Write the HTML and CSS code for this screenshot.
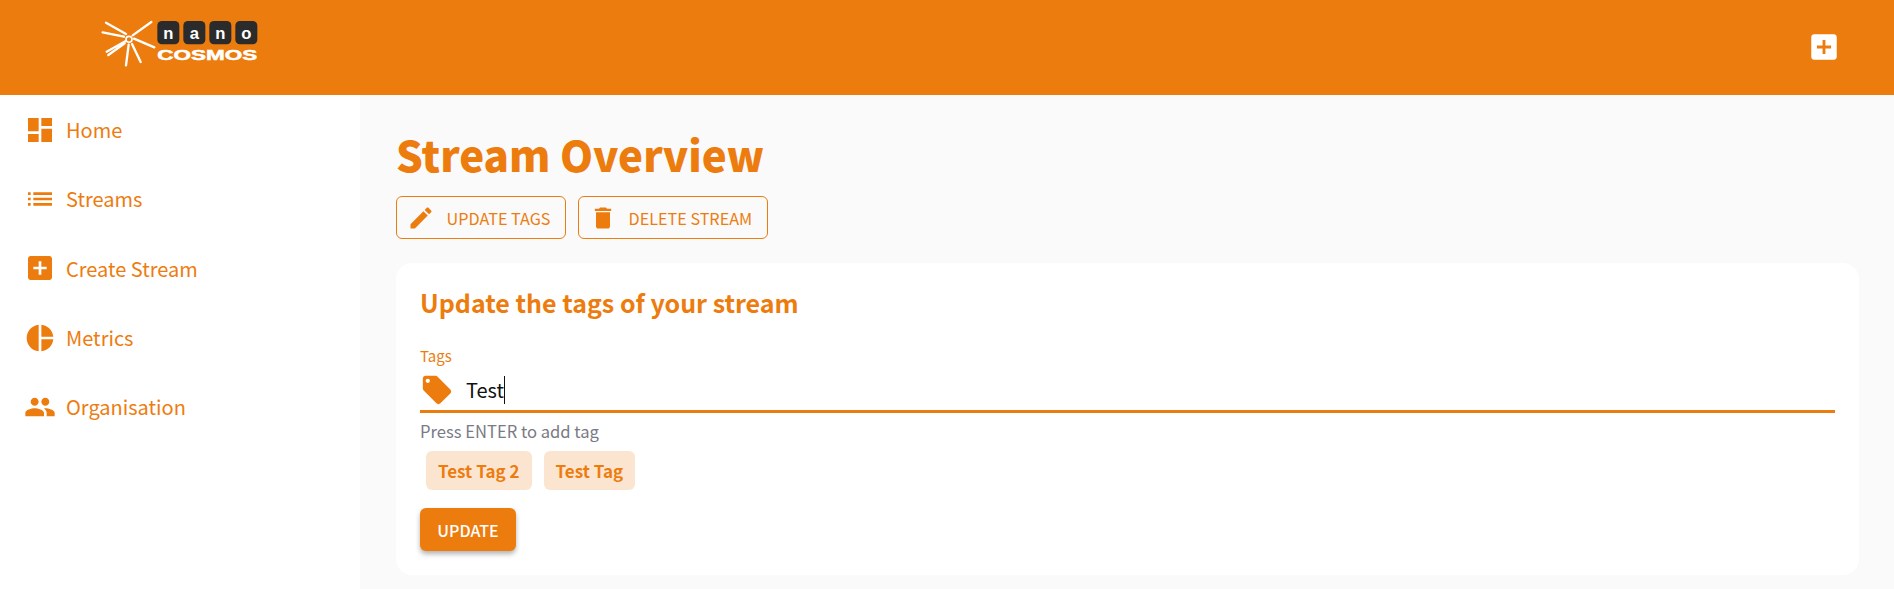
FILE: index.html
```html
<!DOCTYPE html>
<html lang="en">
<head>
<meta charset="utf-8">
<title>Stream Overview</title>
<link rel="stylesheet" href="styles.css">
</head>
<body>
<header class="topbar">
  <svg class="logo" viewBox="0 0 660 285" aria-label="nanoCOSMOS">
    <g class="rays">
      <path d="M78 68L138 102M68 97L132 110M80 155L136 124M85 165L134 130M138 196L146 134M182 186L156 132M223 142L162 116M214 66L158 106"/>
      <circle cx="147" cy="118" r="9"/>
    </g>
    <rect class="tile" x="232" y="63" width="66" height="70" rx="14"/>
    <rect class="tile" x="310" y="63" width="66" height="70" rx="14"/>
    <rect class="tile" x="388" y="63" width="66" height="70" rx="14"/>
    <rect class="tile" x="466" y="63" width="66" height="70" rx="14"/>
    <text class="logo-nano" x="265" y="116">n</text>
    <text class="logo-nano" x="343" y="116">a</text>
    <text class="logo-nano" x="421" y="116">n</text>
    <text class="logo-nano" x="499" y="116">o</text>
    <text class="logo-cosmos" x="232" y="179" textLength="300" lengthAdjust="spacingAndGlyphs">COSMOS</text>
  </svg>
  <svg class="top-add" viewBox="0 0 24 24"><path d="M19 3H5c-1.11 0-2 .9-2 2v14c0 1.1.89 2 2 2h14c1.1 0 2-.9 2-2V5c0-1.1-.9-2-2-2zm-2 10h-4v4h-2v-4H7v-2h4V7h2v4h4v2z"/></svg>
</header>
<div class="shell">
  <nav class="sidebar">
    <a class="nav-item"><svg class="nav-icon" viewBox="0 0 24 24"><path d="M3 13h8V3H3v10zm0 8h8v-6H3v6zm10 0h8V11h-8v10zm0-18v6h8V3h-8z"/></svg><span>Home</span></a>
    <a class="nav-item"><svg class="nav-icon" viewBox="0 0 24 24"><path d="M3 13h2v-2H3v2zm0 4h2v-2H3v2zm0-8h2V7H3v2zm4 4h14v-2H7v2zm0 4h14v-2H7v2zM7 7v2h14V7H7z"/></svg><span>Streams</span></a>
    <a class="nav-item"><svg class="nav-icon" viewBox="0 0 24 24"><path d="M19 3H5c-1.11 0-2 .9-2 2v14c0 1.1.89 2 2 2h14c1.1 0 2-.9 2-2V5c0-1.1-.9-2-2-2zm-2 10h-4v4h-2v-4H7v-2h4V7h2v4h4v2z"/></svg><span>Create Stream</span></a>
    <a class="nav-item"><svg class="nav-icon" viewBox="0 0 24 24"><path d="M11 2v20c-5.07-.5-9-4.79-9-10s3.93-9.5 9-10zm2.03 0v8.99H22c-.47-4.74-4.24-8.52-8.97-8.99zm0 11.01V22c4.74-.47 8.5-4.25 8.97-8.99h-8.97z"/></svg><span>Metrics</span></a>
    <a class="nav-item"><svg class="nav-icon" viewBox="0 0 24 24"><path d="M16 11c1.66 0 2.99-1.34 2.99-3S17.66 5 16 5c-1.66 0-3 1.34-3 3s1.34 3 3 3zm-8 0c1.66 0 2.99-1.34 2.99-3S9.66 5 8 5C6.34 5 5 6.34 5 8s1.34 3 3 3zm0 2c-2.33 0-7 1.17-7 3.5V19h14v-2.5c0-2.33-4.67-3.5-7-3.5zm8 0c-.29 0-.62.02-.97.05 1.16.84 1.97 1.97 1.97 3.45V19h6v-2.5c0-2.33-4.67-3.5-7-3.5z"/></svg><span>Organisation</span></a>
  </nav>
  <main class="content">
    <h1 class="page-title">Stream Overview</h1>
    <div class="actions">
      <button class="outline-btn"><svg class="btn-icon" viewBox="0 0 24 24"><path d="M3 17.25V21h3.75L17.81 9.94l-3.75-3.75L3 17.25zM20.71 7.04c.39-.39.39-1.02 0-1.41l-2.34-2.34c-.39-.39-1.02-.39-1.41 0l-1.83 1.83 3.75 3.75 1.83-1.83z"/></svg>UPDATE TAGS</button>
      <button class="outline-btn"><svg class="btn-icon" viewBox="0 0 24 24"><path d="M6 19c0 1.1.9 2 2 2h8c1.1 0 2-.9 2-2V7H6v12zM19 4h-3.5l-1-1h-5l-1 1H5v2h14V4z"/></svg>DELETE STREAM</button>
    </div>
    <section class="card">
      <h2 class="card-title">Update the tags of your stream</h2>
      <div class="field-label">Tags</div>
      <div class="field">
        <svg class="field-icon" viewBox="0 0 24 24"><path d="M21.41 11.58l-9-9C12.05 2.22 11.55 2 11 2H4c-1.1 0-2 .9-2 2v7c0 .55.22 1.05.59 1.42l9 9c.36.36.86.58 1.41.58.55 0 1.05-.22 1.41-.59l7-7c.37-.36.59-.86.59-1.41 0-.55-.23-1.06-.59-1.42zM5.5 7C4.67 7 4 6.33 4 5.5S4.67 4 5.5 4 7 4.67 7 5.5 6.33 7 5.5 7z"/></svg>
        <span class="field-value">Test</span><span class="caret"></span>
      </div>
      <div class="helper">Press ENTER to add tag</div>
      <div class="chips">
        <span class="chip">Test Tag 2</span>
        <span class="chip">Test Tag</span>
      </div>
      <button class="primary-btn">UPDATE</button>
    </section>
  </main>
</div>
</body>
</html>
```
FILE: styles.css
```css
* { box-sizing: border-box; }
html, body { margin: 0; height: 100%; overflow: hidden; }
body {
  font-family: "Noto Sans CJK SC", "Noto Sans", sans-serif;
  color: #ed7c0f;
  background: #fafafa;
}
svg { display: block; fill: currentColor; flex: none; }

.topbar {
  height: 95px;
  background: #ed7c0f;
  display: flex;
  align-items: center;
  justify-content: space-between;
  padding: 0 53px 0 80px;
}
.logo { width: 220px; height: 95px; }
.rays path { fill: none; stroke: #fff; stroke-width: 7; stroke-linecap: round; }
.rays circle { fill: #ed7c0f; stroke: #fff; stroke-width: 5; }
.tile { fill: #2b2b2b; }
.logo-nano {
  font-family: "Liberation Sans", sans-serif;
  font-weight: 700;
  font-size: 50px;
  fill: #fff;
  text-anchor: middle;
}
.logo-cosmos {
  font-family: "Liberation Sans", sans-serif;
  font-weight: 700;
  font-size: 44px;
  fill: #fff;
  stroke: #fff;
  stroke-width: 1.5px;
}
.top-add { width: 34px; height: 34px; color: #fff; margin-bottom: 1px; }

.shell { display: flex; height: 494px; }
.sidebar {
  width: 360px;
  background: #fff;
  display: flex;
  flex-direction: column;
}
.nav-item {
  height: 69.3px;
  display: flex;
  align-items: center;
  gap: 10px;
  padding-left: 24px;
  font-size: 20px;
}
.nav-icon { width: 32px; height: 32px; }

.content { flex: 1; padding: 29px 35px 0 36px; min-width: 0; }
.page-title {
  margin: 0;
  font-size: 42px;
  line-height: 60px;
  font-weight: 900;
}
.actions { display: flex; gap: 12px; margin-top: 12px; }
.outline-btn {
  height: 43px;
  display: flex;
  align-items: center;
  gap: 11.5px;
  padding: 0 14.5px 0 10px;
  border: 1px solid #ed7c0f;
  border-radius: 6px;
  background: transparent;
  color: #ed7c0f;
  font: inherit;
  font-size: 16.2px;
}
.btn-icon { width: 28px; height: 28px; }

.card {
  margin-top: 24px;
  height: 312px;
  background: #fff;
  border-radius: 16px;
  padding: 22px 24px 0;
}
.card-title {
  margin: 0;
  font-size: 25px;
  line-height: 34px;
  font-weight: 700;
}
.field-label { margin-top: 26.5px; font-size: 15px; line-height: 20px; }
.field {
  height: 47.5px;
  padding-top: 4px;
  display: flex;
  align-items: center;
  border-bottom: 3px solid #ed7c0f;
  color: #111;
}
.field-icon { width: 34px; height: 34px; color: #ed7c0f; }
.field-value { margin-left: 12px; font-size: 20px; }
.caret { width: 1px; height: 28px; background: #111; }
.helper { margin-top: 7px; font-size: 16.6px; line-height: 22px; color: #7a7a85; }
.chips { display: flex; gap: 12px; margin: 9px 0 0 6px; }
.chip {
  height: 39px;
  display: flex;
  align-items: center;
  padding: 0 12px;
  border-radius: 6px;
  background: #fbe5d0;
  font-size: 17px;
  font-weight: 700;
}
.primary-btn {
  display: block;
  margin-top: 18px;
  width: 96px;
  height: 43px;
  border: 0;
  border-radius: 6px;
  background: #ed7c0f;
  color: #fff;
  font: inherit;
  font-size: 16px;
  font-weight: 500;
  box-shadow: 0 3px 5px rgba(0, 0, 0, 0.3);
}
```
